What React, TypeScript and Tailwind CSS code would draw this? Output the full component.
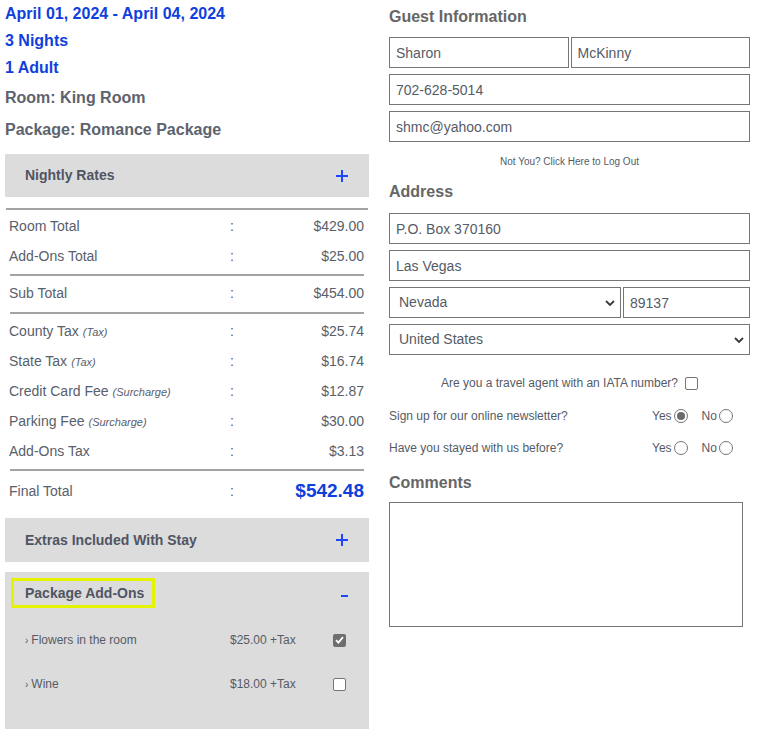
import React from 'react';

const blue = 'text-[#0f3fdc]';

type Rate = { label: string; note?: string; value: string };

const firstRates: Rate[] = [
  { label: 'Room Total', value: '$429.00' },
  { label: 'Add-Ons Total', value: '$25.00' },
];

const taxRates: Rate[] = [
  { label: 'County Tax', note: '(Tax)', value: '$25.74' },
  { label: 'State Tax', note: '(Tax)', value: '$16.74' },
  { label: 'Credit Card Fee', note: '(Surcharge)', value: '$12.87' },
  { label: 'Parking Fee', note: '(Surcharge)', value: '$30.00' },
  { label: 'Add-Ons Tax', value: '$3.13' },
];

function RateRow({ label, note, value }: Rate) {
  return (
    <div className="flex h-[30px] items-center pl-[4px] pr-[5px] text-[14px] text-[#58606c]">
      <div className="w-[221px]">
        {label}
        {note ? <i className="ml-[4px] text-[11px]">{note}</i> : null}
      </div>
      <div className="w-[10px]">:</div>
      <div className="flex-1 text-right">{value}</div>
    </div>
  );
}

function Plus() {
  return (
    <svg width="12" height="12" viewBox="0 0 12 12" className="block">
      <rect x="5" y="0" width="2" height="12" fill="#1f46ff" />
      <rect x="0" y="5" width="12" height="2" fill="#1f46ff" />
    </svg>
  );
}

function Chevron() {
  return (
    <svg width="10" height="6" viewBox="0 0 10 6" className="block">
      <path d="M1 1l4 4 4-4" fill="none" stroke="#3a3a3a" strokeWidth="1.8" />
    </svg>
  );
}

function CheckBox({ checked }: { checked?: boolean }) {
  if (checked) {
    return (
      <span className="flex size-[13px] items-center justify-center rounded-[2px] bg-[#6e6e6e]">
        <svg width="9" height="8" viewBox="0 0 9 8">
          <path d="M1 4.2l2.4 2.4L8 1.2" fill="none" stroke="#fff" strokeWidth="1.8" />
        </svg>
      </span>
    );
  }
  return <span className="block size-[13px] rounded-[2px] border border-[#767676] bg-white" />;
}

function Radio({ checked }: { checked?: boolean }) {
  return (
    <span className="ml-[2px] flex size-[14px] items-center justify-center rounded-full border border-[#767676] bg-white">
      {checked ? <span className="block size-[8px] rounded-full bg-[#6b6b6b]" /> : null}
    </span>
  );
}

const inputCls =
  'h-[31px] w-full border border-[#767676] bg-white px-[6px] text-[14px] text-[#555b66] outline-none';

function Field({ value }: { value: string }) {
  return <input readOnly defaultValue={value} className={inputCls} />;
}

function SelectBox({ value }: { value: string }) {
  return (
    <div className="flex h-[31px] items-center justify-between border border-[#767676] bg-white pl-[9px] pr-[5px] text-[14px] text-[#555b66]">
      <span>{value}</span>
      <Chevron />
    </div>
  );
}

function YesNo({ label, yes }: { label: string; yes?: boolean }) {
  return (
    <div className="flex h-[32px] items-center text-[12px] text-[#555b66]">
      <div className="w-[263px]">{label}</div>
      <span>Yes</span>
      <Radio checked={yes} />
      <span className="ml-[14px]">No</span>
      <Radio />
    </div>
  );
}

export default function App() {
  return (
    <div className="flex min-h-[736px] w-[759px] gap-[20px] bg-white pl-[5px] font-['Liberation_Sans',Arial,sans-serif]">
      {/* left column */}
      <div className="w-[364px] shrink-0">
        <div className={`flex h-[27px] items-center text-[16px] font-bold ${blue}`}>
          April 01, 2024 - April 04, 2024
        </div>
        <div className={`flex h-[27px] items-center text-[16px] font-bold ${blue}`}>3 Nights</div>
        <div className={`flex h-[28px] items-center text-[16px] font-bold ${blue}`}>1 Adult</div>
        <div className="flex h-[32px] items-center text-[16px] font-bold text-[#5d636e]">
          Room: King Room
        </div>
        <div className="flex h-[32px] items-center text-[16px] font-bold text-[#5d636e]">
          Package: Romance Package
        </div>

        <div className="mt-[8px] flex h-[43px] items-center justify-between bg-[#dcdcdc] pl-[20px] pr-[21px]">
          <span className="text-[14px] font-bold text-[#4f5563]">Nightly Rates</span>
          <Plus />
        </div>

        <div className="mt-[11px] border-t-2 border-[#a3a3a3] mx-[1px]" />
        <div className="pt-[1px] pb-[3px]">
          {firstRates.map((r) => (
            <RateRow key={r.label} {...r} />
          ))}
        </div>
        <div className="mx-[5px] border-t-2 border-[#a3a3a3]" />
        <div className="pt-[2px] pb-[4px]">
          <RateRow label="Sub Total" value="$454.00" />
        </div>
        <div className="mx-[5px] border-t-2 border-[#a3a3a3]" />
        <div className="pt-[2px] pb-[3px]">
          {taxRates.map((r) => (
            <RateRow key={r.label} {...r} />
          ))}
        </div>
        <div className="mx-[5px] border-t-2 border-[#a3a3a3]" />
        <div className="flex h-[30px] mt-[5px] items-center pl-[4px] pr-[5px] text-[14px] text-[#58606c]">
          <div className="w-[221px]">Final Total</div>
          <div className="w-[10px]">:</div>
          <div className={`flex-1 text-right text-[19px] font-bold ${blue}`}>$542.48</div>
        </div>

        <div className="mt-[12px] flex h-[44px] items-center justify-between bg-[#dcdcdc] pl-[20px] pr-[21px]">
          <span className="text-[14px] font-bold text-[#4f5563]">Extras Included With Stay</span>
          <Plus />
        </div>

        <div className="mt-[10px] h-[157px] bg-[#dcdcdc] pt-[6px]">
          <div className="flex items-center justify-between pl-[6px] pr-[21px]">
            <div className="flex h-[30px] items-center border-[3px] border-[#e4f400] pl-[11px] pr-[8px] text-[14px] font-bold text-[#4f5563]">
              Package Add-Ons
            </div>
            <span className="mt-[6px] block h-[2px] w-[7px] bg-[#1f46ff]" />
          </div>
          <div className="mt-[10px] pl-[20px] text-[12px] text-[#555b66]">
            <div className="flex h-[44px] items-center">
              <div className="w-[205px]">
                <span className="mr-[3px] text-[10px]">›</span>Flowers in the room
              </div>
              <div className="w-[103px]">$25.00 +Tax</div>
              <CheckBox checked />
            </div>
            <div className="flex h-[44px] items-center">
              <div className="w-[205px]">
                <span className="mr-[3px] text-[10px]">›</span>Wine
              </div>
              <div className="w-[103px]">$18.00 +Tax</div>
              <CheckBox />
            </div>
          </div>
        </div>
      </div>

      {/* right column */}
      <div className="w-[361px] shrink-0 pt-[7px]">
        <div className="flex h-[20px] items-center text-[16px] font-bold text-[#666]">Guest Information</div>
        <div className="mt-[10px] flex flex-col gap-[6px]">
          <div className="grid grid-cols-2 gap-[2px]">
            <Field value="Sharon" />
            <Field value="McKinny" />
          </div>
          <Field value="702-628-5014" />
          <Field value="shmc@yahoo.com" />
        </div>
        <div className="mt-[13px] flex h-[12px] items-center justify-center text-[10px] text-[#555b66]">
          Not You? Click Here to Log Out
        </div>

        <div className="mt-[15px] flex h-[20px] items-center text-[16px] font-bold text-[#666]">Address</div>
        <div className="mt-[11px] flex flex-col gap-[6px]">
          <Field value="P.O. Box 370160" />
          <Field value="Las Vegas" />
          <div className="grid grid-cols-[232px_1fr] gap-[2px]">
            <SelectBox value="Nevada" />
            <Field value="89137" />
          </div>
          <SelectBox value="United States" />
        </div>

        <div className="mt-[20px] flex h-[16px] items-center justify-center text-[12px] text-[#555b66]">
          <span>Are you a travel agent with an IATA number?</span>
          <span className="ml-[7px]">
            <CheckBox />
          </span>
        </div>
        <div className="mt-[9px]">
          <YesNo label="Sign up for our online newsletter?" yes />
          <YesNo label="Have you stayed with us before?" />
        </div>

        <div className="mt-[9px] flex h-[20px] items-center text-[16px] font-bold text-[#666]">Comments</div>
        <textarea
          readOnly
          className="mt-[9px] block h-[125px] w-[354px] resize-none border border-[#767676] bg-white outline-none"
        />
      </div>
    </div>
  );
}
